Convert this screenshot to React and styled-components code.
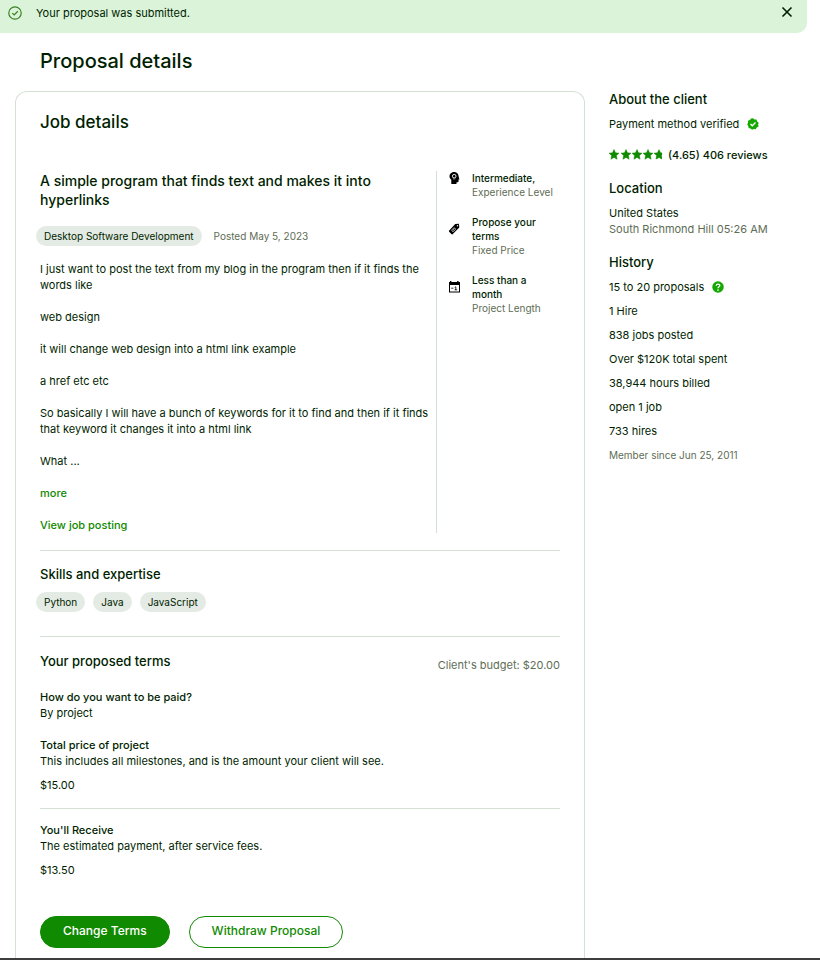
import React from 'react';
import styled, { createGlobalStyle } from 'styled-components';

const GlobalStyle = createGlobalStyle`
  *, *::before, *::after { box-sizing: border-box; }
  body {
    margin: 0;
    background: #fff;
    color: #001e00;
    font-family: Inter, 'Liberation Sans', sans-serif;
    font-size: 11px;
    line-height: 16px;
  }
  h1, h2, h3, h4, p, ul, dl, dd { margin: 0; padding: 0; }
  ul { list-style: none; }
  button { font: inherit; cursor: pointer; }
`;

const Page = styled.div`
  display: flex;
  flex-direction: column;
  min-height: 100vh;
`;

const Banner = styled.div`
  display: flex;
  align-items: flex-start;
  gap: 14px;
  margin-right: 13px;
  padding: 5px 14px 12px 8px;
  background: #dbf3d9;
  border-bottom-right-radius: 10px;
`;

const BannerText = styled.p`
  flex: 1;
`;

const IconButton = styled.button`
  display: flex;
  align-items: center;
  padding: 0;
  border: 0;
  background: none;
  color: #001e00;
`;

const CloseButton = styled(IconButton)`
  height: 14px;
`;

const PageTitle = styled.h1`
  padding: 14px 40px 16px;
  font-size: 20px;
  font-weight: 500;
  line-height: 28px;
`;

const Columns = styled.main`
  display: grid;
  flex: 1;
  grid-template-columns: minmax(0, 1fr) 198px;
  gap: 24px;
  padding: 0 13px 0 15px;
`;

const Card = styled.section`
  padding: 18px 24px 10px;
  border: 1px solid #d5e0d5;
  border-bottom: 0;
  border-radius: 12px 12px 0 0;
`;

const CardTitle = styled.h2`
  font-size: 17px;
  font-weight: 500;
  line-height: 24px;
`;

const Job = styled.div`
  display: grid;
  grid-template-columns: minmax(0, 1fr) 124px;
  margin-top: 37px;
`;

const JobTitle = styled.h3`
  padding-right: 24px;
  font-size: 14px;
  font-weight: 500;
  line-height: 19px;
`;

const JobMeta = styled.div`
  display: flex;
  align-items: center;
  gap: 12px;
  margin: 17px 0 15px -4px;
`;

const Pill = styled.span`
  padding: 0 8px;
  border-radius: 10px;
  background: #e4ebe4;
  font-size: 10px;
  line-height: 20px;
`;

const Muted = styled.span`
  color: #5e6d55;
  font-size: ${(p) => (p.$small ? '10px' : '11px')};
`;

const Description = styled.div`
  display: flex;
  flex-direction: column;
  align-items: flex-start;
  gap: 16px;
`;

const TextLink = styled.a`
  color: #108a00;
  font-weight: 500;
  text-decoration: none;
`;

const MoreButton = styled(IconButton)`
  color: #108a00;
  font-weight: 500;
`;

const Features = styled.ul`
  display: flex;
  flex-direction: column;
  gap: 16px;
  padding-left: 11px;
  border-left: 1px solid #d5e0d5;
  font-size: 10px;
  line-height: 14px;
`;

const Feature = styled.li`
  display: grid;
  grid-template-columns: 12px 1fr;
  gap: 12px;
`;

const FeatureIcon = styled.span`
  display: flex;
  height: ${(p) => (p.$tall ? '28px' : '14px')};
  align-items: center;
`;

const FeatureName = styled.strong`
  display: block;
  max-width: 72px;
  font-weight: 500;
`;

const Rule = styled.hr`
  height: 1px;
  margin: ${(p) => p.$top}px 0 ${(p) => p.$bottom}px;
  border: 0;
  background: #d5e0d5;
`;

const SectionTitle = styled.h3`
  font-size: 13px;
  font-weight: 500;
  line-height: 16px;
`;

const Pills = styled.ul`
  display: flex;
  gap: 8px;
  margin: 10px 0 0 -4px;
`;

const TermsHeader = styled.div`
  display: flex;
  justify-content: space-between;
  align-items: flex-start;
`;

const Budget = styled(Muted)`
  padding-top: 4px;
`;

const TermList = styled.dl`
  margin-top: ${(p) => (p.$first ? '16px' : '0')};
`;

const TermName = styled.dt`
  font-weight: 500;
  dd + & { margin-top: 16px; }
`;

const Amount = styled.dd`
  padding-top: 8px;
`;

const Actions = styled.div`
  display: flex;
  gap: 19px;
  margin-top: 38px;
`;

const ActionButton = styled.button`
  height: 32px;
  padding: 0 22px 2px;
  border: 1px solid #108a00;
  border-radius: 16px;
  background: ${(p) => (p.$primary ? '#108a00' : '#fff')};
  color: ${(p) => (p.$primary ? '#fff' : '#108a00')};
  font-size: 12px;
  font-weight: 500;
`;

const Sidebar = styled.aside`
  display: flex;
  flex-direction: column;
`;

const SideBlock = styled.section`
  display: flex;
  flex-direction: column;
  & + & { margin-top: 17px; }
`;

const SideTitle = styled(SectionTitle)`
  margin-bottom: 9px;
`;

const IconRow = styled.div`
  display: flex;
  align-items: center;
  gap: 8px;
`;

const Rating = styled.div`
  display: flex;
  align-items: center;
  gap: 5px;
  margin-top: 15px;
  font-weight: 500;
`;

const History = styled.ul`
  display: flex;
  flex-direction: column;
  gap: 8px;
`;

const BottomEdge = styled.footer`
  height: 2px;
  background: #3d3d3d;
`;

function CheckCircleIcon() {
  return (
    <svg width="14" height="16" viewBox="0 0 14 16" fill="none" stroke="#3c8224" aria-hidden="true">
      <circle cx="7" cy="8" r="6.2" strokeWidth="1.2" />
      <path d="M4.3 8.1 6.2 9.9 9.8 6.2" strokeWidth="1.3" />
    </svg>
  );
}

function CloseIcon() {
  return (
    <svg width="12" height="12" viewBox="0 0 12 12" stroke="currentColor" strokeWidth="1.6" aria-hidden="true">
      <path d="M1.5 1.5 10.5 10.5M10.5 1.5 1.5 10.5" />
    </svg>
  );
}

function VerifiedIcon() {
  return (
    <svg width="12" height="12" viewBox="0 0 24 24" aria-label="Verified" role="img">
      <path
        fill="#14a800"
        d="M12 0.5 15 3 19 3 20.3 6.8 23.4 9.3 22.3 13 23 17 19.5 18.8 17.5 22.3 13.7 22 10 23.5 7 21 3.2 20 2.5 16.2 0.5 13 2 9.4 2 5.4 5.7 4 8.3 1Z"
      />
      <path d="M7 12.2 10.6 15.6 17 9" fill="none" stroke="#fff" strokeWidth="2.8" />
    </svg>
  );
}

function HelpIcon() {
  return (
    <svg width="12" height="12" viewBox="0 0 24 24" fill="none" aria-label="Help" role="img">
      <circle cx="12" cy="12" r="11.5" fill="#14a800" />
      <path d="M8.4 9.6C8.6 4.8 15.8 5.2 15.6 9.4 15.5 11.8 12 11.6 12 14.6" stroke="#fff" strokeWidth="2.6" />
      <circle cx="12" cy="18" r="1.7" fill="#fff" />
    </svg>
  );
}

const STAR = 'M5 0 6.5 3.3 10 3.7 7.4 6.1 8.1 9.7 5 7.9 1.9 9.7 2.6 6.1 0 3.7 3.5 3.3Z';

function Stars() {
  return (
    <svg width="54" height="12" viewBox="0 0 54 12" fill="#108a00" aria-label="4.65 out of 5 stars" role="img">
      <defs>
        <clipPath id="part-star">
          <rect width="8" height="10" />
        </clipPath>
      </defs>
      {[0, 12, 23, 34].map((x) => (
        <path key={x} d={STAR} stroke="#108a00" strokeWidth=".5" transform={`translate(${x} .5)`} />
      ))}
      <g transform="translate(45 .5)">
        <path d={STAR} fill="#e4ebe4" />
        <path d={STAR} stroke="#108a00" strokeWidth=".5" clipPath="url(#part-star)" />
      </g>
    </svg>
  );
}

function ExpertiseIcon() {
  return (
    <svg width="12" height="12" viewBox="0 0 12 12" aria-hidden="true">
      <path d="M6.3 0C3.7 0 1.5 1.8 1.5 4.3 1.5 6 2.3 7 3.3 7.8V12H8.5V10.2H9.7Q10.5 10.2 10.5 9.2V7.4H11.4L10.6 4.3C10.5 1.8 8.7 0 6.3 0Z" />
      <circle cx="6.2" cy="4.2" r="1.8" fill="none" stroke="#fff" strokeWidth=".9" />
      <path d="M5 6.9H7.4" stroke="#fff" strokeWidth=".5" />
    </svg>
  );
}

function TagIcon() {
  return (
    <svg width="12" height="12" viewBox="0 0 12 12" aria-hidden="true">
      <path d="M7.2 1 10.9.8 11.3 4.6 4.6 11.2Q4 11.7 3.4 11.1L1.1 8.7Q.6 8.1 1.2 7.5Z" />
      <circle cx="9.5" cy="2.7" r=".7" fill="#fff" />
      <ellipse cx="5.6" cy="6.7" rx="2.1" ry="1.3" transform="rotate(-45 5.6 6.7)" fill="none" stroke="#fff" strokeWidth=".6" />
      <path d="M4.9 7.4 6.3 6" stroke="#fff" strokeWidth=".7" />
    </svg>
  );
}

function CalendarIcon() {
  return (
    <svg width="12" height="12" viewBox="0 0 12 12" aria-hidden="true">
      <path d="M2 0H3.4V1H9.1V0H10.5V1H12V11.5H1V1H2ZM2 4V10.5H11V4Z" fillRule="evenodd" />
      <path d="M3.2 7.2H5.4M6.7 6.4 7.8 5.8V9M6.6 8.8H9.1" fill="none" stroke="#000" strokeWidth=".8" />
    </svg>
  );
}

const features = [
  { name: 'Intermediate,', label: 'Experience Level', Icon: ExpertiseIcon, tall: false },
  { name: 'Propose your terms', label: 'Fixed Price', Icon: TagIcon, tall: true },
  { name: 'Less than a month', label: 'Project Length', Icon: CalendarIcon, tall: true },
];

const skills = ['Python', 'Java', 'JavaScript'];

const history = [
  '1 Hire',
  '838 jobs posted',
  'Over $120K total spent',
  '38,944 hours billed',
  'open 1 job',
  '733 hires',
];

export default function App() {
  return (
    <Page>
      <GlobalStyle />
      <Banner role="status">
        <CheckCircleIcon />
        <BannerText>Your proposal was submitted.</BannerText>
        <CloseButton type="button" aria-label="Close">
          <CloseIcon />
        </CloseButton>
      </Banner>
      <PageTitle>Proposal details</PageTitle>
      <Columns>
        <Card>
          <CardTitle>Job details</CardTitle>
          <Job>
            <div>
              <JobTitle>A simple program that finds text and makes it into hyperlinks</JobTitle>
              <JobMeta>
                <Pill>Desktop Software Development</Pill>
                <Muted $small>Posted May 5, 2023</Muted>
              </JobMeta>
              <Description>
                <p>I just want to post the text from my blog in the program then if it finds the words like</p>
                <p>web design</p>
                <p>it will change web design into a html link example</p>
                <p>a href etc etc</p>
                <p>
                  So basically I will have a bunch of keywords for it to find and then if it finds that keyword it
                  changes it into a html link
                </p>
                <p>What ...</p>
                <MoreButton type="button">more</MoreButton>
                <TextLink href="#job">View job posting</TextLink>
              </Description>
            </div>
            <Features>
              {features.map(({ name, label, Icon, tall }) => (
                <Feature key={label}>
                  <FeatureIcon $tall={tall}>
                    <Icon />
                  </FeatureIcon>
                  <div>
                    <FeatureName>{name}</FeatureName>
                    <Muted $small>{label}</Muted>
                  </div>
                </Feature>
              ))}
            </Features>
          </Job>
          <Rule $top={17} $bottom={15} />
          <SectionTitle>Skills and expertise</SectionTitle>
          <Pills>
            {skills.map((skill) => (
              <Pill as="li" key={skill}>
                {skill}
              </Pill>
            ))}
          </Pills>
          <Rule $top={24} $bottom={16} />
          <TermsHeader>
            <SectionTitle>Your proposed terms</SectionTitle>
            <Budget>Client's budget: $20.00</Budget>
          </TermsHeader>
          <TermList $first>
            <TermName>How do you want to be paid?</TermName>
            <dd>By project</dd>
            <TermName>Total price of project</TermName>
            <dd>This includes all milestones, and is the amount your client will see.</dd>
            <Amount>$15.00</Amount>
          </TermList>
          <Rule $top={15} $bottom={13} />
          <TermList>
            <TermName>You'll Receive</TermName>
            <dd>The estimated payment, after service fees.</dd>
            <Amount>$13.50</Amount>
          </TermList>
          <Actions>
            <ActionButton type="button" $primary>
              Change Terms
            </ActionButton>
            <ActionButton type="button">Withdraw Proposal</ActionButton>
          </Actions>
        </Card>
        <Sidebar>
          <SideBlock>
            <SideTitle>About the client</SideTitle>
            <IconRow>
              Payment method verified
              <VerifiedIcon />
            </IconRow>
            <Rating>
              <Stars />
              (4.65) 406 reviews
            </Rating>
          </SideBlock>
          <SideBlock>
            <SideTitle>Location</SideTitle>
            <p>United States</p>
            <Muted>South Richmond Hill 05:26 AM</Muted>
          </SideBlock>
          <SideBlock>
            <SideTitle>History</SideTitle>
            <History>
              <li>
                <IconRow>
                  15 to 20 proposals
                  <HelpIcon />
                </IconRow>
              </li>
              {history.map((line) => (
                <li key={line}>{line}</li>
              ))}
              <li>
                <Muted $small>Member since Jun 25, 2011</Muted>
              </li>
            </History>
          </SideBlock>
        </Sidebar>
      </Columns>
      <BottomEdge />
    </Page>
  );
}
